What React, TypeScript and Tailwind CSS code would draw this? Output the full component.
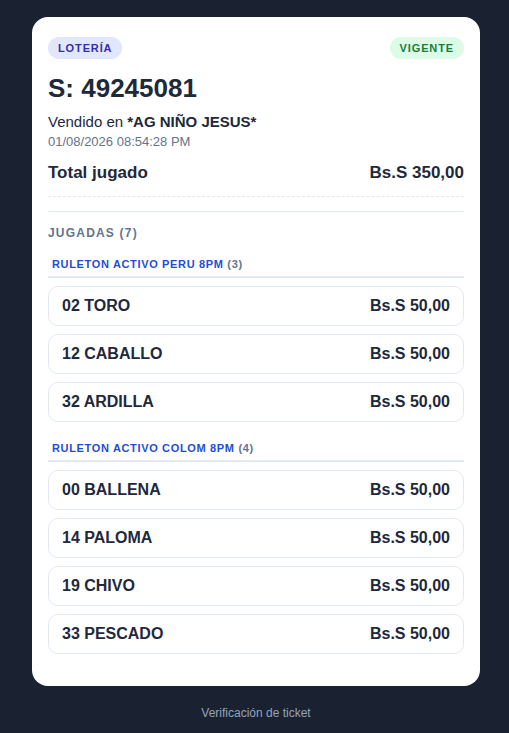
const groups = [
  {
    name: "RULETON ACTIVO PERU 8PM",
    items: ["02 TORO", "12 CABALLO", "32 ARDILLA"],
  },
  {
    name: "RULETON ACTIVO COLOM 8PM",
    items: ["00 BALLENA", "14 PALOMA", "19 CHIVO", "33 PESCADO"],
  },
];

const App = () => {
  return (
    <div className="min-h-screen bg-[#1a2231] pl-8 pt-[17px] font-['Liberation_Sans',Arial,sans-serif] text-[#1e293b]">
      <div className="w-[448px]">
        <div className="bg-white rounded-2xl px-4 pt-5 pb-8">
          <div className="flex justify-between items-center">
            <span className="rounded-full bg-[#e0e7ff] px-2.5 py-[3px] text-[11px] leading-4 font-bold tracking-[0.08em] text-[#3730a3]">
              LOTERÍA
            </span>
            <span className="rounded-full bg-[#dcfce7] px-2.5 py-[3px] text-[11px] leading-4 font-bold tracking-[0.08em] text-[#15803d]">
              VIGENTE
            </span>
          </div>

          <h1 className="mt-3 text-[26px] leading-[34px] font-bold">S: 49245081</h1>
          <p className="mt-1.5 text-[15px] leading-[22px]">
            Vendido en <span className="font-bold">*AG NIÑO JESUS*</span>
          </p>
          <p className="text-[13px] leading-[18px] text-[#64748b]">01/08/2026 08:54:28 PM</p>

          <div className="mt-2.5 flex justify-between pb-[11px] border-b border-dashed border-[#e2e8f0] text-[17px] leading-6 font-bold">
            <span>Total jugado</span>
            <span>Bs.S 350,00</span>
          </div>

          <div className="mt-[14px] border-t border-[#e2e8f0] pt-[13px]">
            <div className="text-[12px] leading-4 font-bold tracking-[0.1em] text-[#64748b]">JUGADAS (7)</div>

            {groups.map((g, gi) => (
              <div key={g.name} className={gi === 0 ? "mt-[15px]" : "mt-[18px]"}>
                <div className="px-1 pb-1 border-b-2 border-[#e2e8f0] text-[11px] leading-4 font-bold tracking-[0.06em] text-[#1d4ed8]">
                  {g.name} <span className="text-[#64748b]">({g.items.length})</span>
                </div>
                <div className="mt-2 flex flex-col gap-2">
                  {g.items.map((it) => (
                    <div
                      key={it}
                      className="h-10 flex items-center justify-between px-[13px] rounded-[10px] border border-[#e2e8f0] text-[16px] font-bold"
                    >
                      <span>{it}</span>
                      <span>Bs.S 50,00</span>
                    </div>
                  ))}
                </div>
              </div>
            ))}
          </div>
        </div>

        <p className="mt-[19px] text-center text-[12px] leading-4 text-[#94a3b8]">Verificación de ticket</p>
      </div>
    </div>
  );
};

export default App;
